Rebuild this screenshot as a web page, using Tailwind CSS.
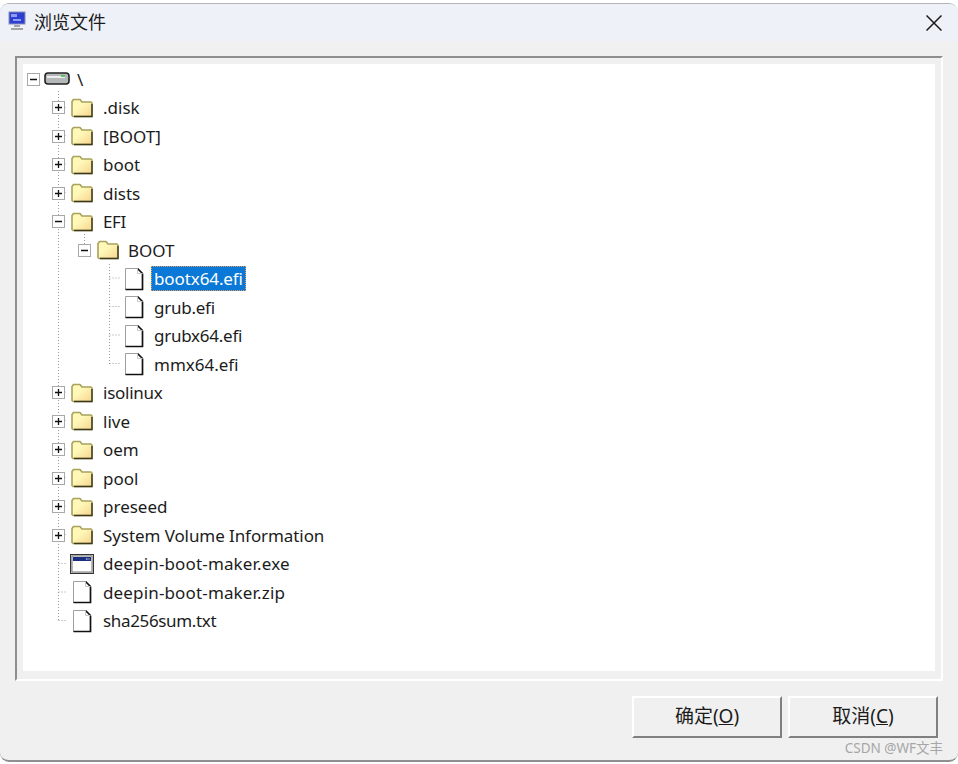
<!DOCTYPE html>
<html lang="zh">
<head>
<meta charset="utf-8">
<title>浏览文件</title>
<script src="https://cdn.jsdelivr.net/npm/@tailwindcss/browser@4"></script>
</head>
<body class="h-[764px] w-[958px] overflow-hidden bg-white font-['Noto_Sans','Noto_Sans_CJK_SC',sans-serif] text-[#1c1c1c]">
<svg class="absolute h-0 w-0" width="0" height="0">
	<defs>
		<symbol id="plus" viewBox="0 0 13 13"><rect x="0.5" y="0.5" width="12" height="12" fill="#fff" stroke="#a8a8a8"/><path d="M3 6.5h7M6.5 3v7" stroke="#111" stroke-width="1.3"/></symbol>
		<symbol id="minus" viewBox="0 0 13 13"><rect x="0.5" y="0.5" width="12" height="12" fill="#fff" stroke="#a8a8a8"/><path d="M3 6.5h7" stroke="#111" stroke-width="1.3"/></symbol>
		<linearGradient id="fold" x1="0" y1="0" x2="1" y2="1"><stop offset="0.4" stop-color="#fff8b8"/><stop offset="1" stop-color="#f6d48e"/></linearGradient>
		<symbol id="folder" viewBox="0 0 22 20"><path d="M1 17.500V3.500L2.500 1.500h6.500l2 2.500h9l1 1v13.500H2z" fill="url(#fold)" stroke="#a8a25c" stroke-width="1.600" stroke-linejoin="round"/><path d="M21 6v12.500H3" fill="none" stroke="#3c391e" stroke-width="1.400"/></symbol>
		<symbol id="file" viewBox="0 0 20 24"><path d="M1.500 1.500h12l5 5v16h-17z" fill="#fff" stroke="#a0a0a0"/><path d="M13.500 1.500l5 5M18.500 6.500v16h-17" fill="none" stroke="#111" stroke-width="1.700"/><path d="M13.500 1.500v5h5" fill="none" stroke="#c8c8c8"/></symbol>
		<symbol id="exe" viewBox="0 0 24 20"><rect x="0.500" y="0.500" width="23" height="19" fill="#d8d8d8" stroke="#333"/><rect x="2" y="2" width="20" height="16" fill="#fff" stroke="#777"/><rect x="3" y="3" width="18" height="4" fill="#1a2f80"/><path d="M16 5h1.500M18.500 5h1" stroke="#fff"/></symbol>
	</defs>
</svg>

<div class="mt-[3px] h-[759px] w-[958px] overflow-hidden rounded-[9px] border-t border-b-2 border-t-[#b4b4b4] border-b-[#8f8f8f] bg-[#f0f0f0]">
	<!-- titlebar -->
	<div class="flex h-[37px] items-center bg-[#eef2f8] pb-[2px] pl-[8px]">
		<svg class="h-[21px] w-[19px]" viewBox="0 0 19 21">
			<rect x="1" y="1" width="16" height="12" fill="#2c3fd0" stroke="#8a8fb8"/>
			<path d="M3 3h6v3H3zM5 8h8v2H5z" fill="#8f9cf0"/>
			<path d="M6 14h6v2H6zM3 17h12v2H3z" fill="#a4a4a4"/>
		</svg>
		<span class="ml-[7px] text-[18px] leading-none">浏览文件</span>
		<svg class="ml-auto mr-[16px] mt-[2px] h-[16px] w-[16px]" viewBox="0 0 16 16"><path d="M0.500 0.500l15 15M15.500 0.500l-15 15" stroke="#1a1a1a" stroke-width="1.500" fill="none"/></svg>
	</div>

	<!-- group box -->
	<div class="ml-[15px] mt-[15px] h-[625px] w-[928px] border-[2.500px] border-r-white border-b-white border-t-[#8e8e8e] border-l-[#8e8e8e] px-[6px] pb-[5px] pt-[6px]">
		<div class="relative h-[607px] w-[912px] bg-white pt-[1px] text-[17px]">
			<!-- dotted connectors -->
			<svg class="absolute left-0 top-0" width="130" height="570" fill="none" stroke="#9a9a9a" stroke-dasharray="1 2">
				<path d="M35.500 27V557M35.500 43.500h7M35.500 71.500h7M35.500 100h7M35.500 128.500h7M35.500 157h7M35.500 328h7M35.500 356.500h7M35.500 385h7M35.500 413.500h7M35.500 442h7M35.500 470.500h7M35.500 499.500h7M35.500 528h7M35.500 556.500h7"/>
				<path d="M61.500 170v10M86.500 200V300M86.500 214h11M86.500 242.500h11M86.500 271h11M86.500 299.500h11"/>
			</svg>

			<div class="relative">
				<div class="flex h-[28.5px] items-center pl-[4px]"><svg class="h-[13px] w-[13px]"><use href="#minus"/></svg>
					<svg class="ml-[4px] h-[14px] w-[26px]" viewBox="0 0 26 14"><rect x="1" y="1" width="24" height="11" rx="3" fill="#b4b8b8" stroke="#222" stroke-width="1.600"/><path d="M3 5h18" stroke="#eee" stroke-width="2"/><path d="M17 4h4" stroke="#2fbf4f" stroke-width="1.500"/></svg>
					<span class="ml-[7px]">\</span></div>

				<div class="flex h-[28.5px] items-center pl-[29px]"><svg class="h-[13px] w-[13px]"><use href="#plus"/></svg><svg class="ml-[6px] h-[20px] w-[22px]"><use href="#folder"/></svg><span class="ml-[10px]">.disk</span></div>
				<div class="flex h-[28.5px] items-center pl-[29px]"><svg class="h-[13px] w-[13px]"><use href="#plus"/></svg><svg class="ml-[6px] h-[20px] w-[22px]"><use href="#folder"/></svg><span class="ml-[10px]">[BOOT]</span></div>
				<div class="flex h-[28.5px] items-center pl-[29px]"><svg class="h-[13px] w-[13px]"><use href="#plus"/></svg><svg class="ml-[6px] h-[20px] w-[22px]"><use href="#folder"/></svg><span class="ml-[10px]">boot</span></div>
				<div class="flex h-[28.5px] items-center pl-[29px]"><svg class="h-[13px] w-[13px]"><use href="#plus"/></svg><svg class="ml-[6px] h-[20px] w-[22px]"><use href="#folder"/></svg><span class="ml-[10px]">dists</span></div>
				<div class="flex h-[28.5px] items-center pl-[29px]"><svg class="h-[13px] w-[13px]"><use href="#minus"/></svg><svg class="ml-[6px] h-[20px] w-[22px]"><use href="#folder"/></svg><span class="ml-[10px] tracking-[-0.4px]">EFI</span></div>
				<div class="flex h-[28.5px] items-center pl-[55px]"><svg class="h-[13px] w-[13px]"><use href="#minus"/></svg><svg class="ml-[6px] h-[20px] w-[22px]"><use href="#folder"/></svg><span class="ml-[9px]">BOOT</span></div>

				<div class="flex h-[28.5px] items-center pl-[101px]"><svg class="h-[24px] w-[20px]"><use href="#file"/></svg><span class="ml-[7px] border border-dotted border-[#e8a060] bg-[#0a78d7] px-[2px] leading-[23px] tracking-[-0.1px] text-white">bootx64.efi</span></div>
				<div class="flex h-[28.5px] items-center pl-[101px]"><svg class="h-[24px] w-[20px]"><use href="#file"/></svg><span class="ml-[10px] tracking-[-0.25px]">grub.efi</span></div>
				<div class="flex h-[28.5px] items-center pl-[101px]"><svg class="h-[24px] w-[20px]"><use href="#file"/></svg><span class="ml-[10px] tracking-[-0.25px]">grubx64.efi</span></div>
				<div class="flex h-[28.5px] items-center pl-[101px]"><svg class="h-[24px] w-[20px]"><use href="#file"/></svg><span class="ml-[10px]">mmx64.efi</span></div>

				<div class="flex h-[28.5px] items-center pl-[29px]"><svg class="h-[13px] w-[13px]"><use href="#plus"/></svg><svg class="ml-[6px] h-[20px] w-[22px]"><use href="#folder"/></svg><span class="ml-[10px] tracking-[-0.25px]">isolinux</span></div>
				<div class="flex h-[28.5px] items-center pl-[29px]"><svg class="h-[13px] w-[13px]"><use href="#plus"/></svg><svg class="ml-[6px] h-[20px] w-[22px]"><use href="#folder"/></svg><span class="ml-[10px]">live</span></div>
				<div class="flex h-[28.5px] items-center pl-[29px]"><svg class="h-[13px] w-[13px]"><use href="#plus"/></svg><svg class="ml-[6px] h-[20px] w-[22px]"><use href="#folder"/></svg><span class="ml-[10px]">oem</span></div>
				<div class="flex h-[28.5px] items-center pl-[29px]"><svg class="h-[13px] w-[13px]"><use href="#plus"/></svg><svg class="ml-[6px] h-[20px] w-[22px]"><use href="#folder"/></svg><span class="ml-[10px]">pool</span></div>
				<div class="flex h-[28.5px] items-center pl-[29px]"><svg class="h-[13px] w-[13px]"><use href="#plus"/></svg><svg class="ml-[6px] h-[20px] w-[22px]"><use href="#folder"/></svg><span class="ml-[10px]">preseed</span></div>
				<div class="flex h-[28.5px] items-center pl-[29px]"><svg class="h-[13px] w-[13px]"><use href="#plus"/></svg><svg class="ml-[6px] h-[20px] w-[22px]"><use href="#folder"/></svg><span class="ml-[10px] tracking-[-0.08px]">System Volume Information</span></div>

				<div class="flex h-[28.5px] items-center pl-[47px]"><svg class="h-[20px] w-[24px]"><use href="#exe"/></svg><span class="ml-[9px] tracking-[0.15px]">deepin-boot-maker.exe</span></div>
				<div class="flex h-[28.5px] items-center pl-[49px]"><svg class="h-[24px] w-[20px]"><use href="#file"/></svg><span class="ml-[11px] tracking-[0.15px]">deepin-boot-maker.zip</span></div>
				<div class="flex h-[28.5px] items-center pl-[49px]"><svg class="h-[24px] w-[20px]"><use href="#file"/></svg><span class="ml-[11px] tracking-[-0.35px]">sha256sum.txt</span></div>
			</div>
		</div>
	</div>

	<!-- buttons -->
	<div class="mr-[20px] mt-[15px] flex justify-end gap-[6px]">
		<button class="h-[42px] w-[150px] border-[2px] border-t-white border-l-white border-r-[#808080] border-b-[#808080] bg-[#f0f0f0] pb-[2px] text-[19px]">确定(<span class="underline">O</span>)</button>
		<button class="h-[42px] w-[150px] border-[2px] border-t-white border-l-white border-r-[#808080] border-b-[#808080] bg-[#f0f0f0] pb-[2px] text-[19px]">取消(<span class="underline">C</span>)</button>
	</div>
	<div class="mr-[15px] mt-[1px] text-right text-[13.500px] leading-[18px] text-[#a6a6a6]">CSDN @WF文丰</div>
</div>
</body>
</html>
